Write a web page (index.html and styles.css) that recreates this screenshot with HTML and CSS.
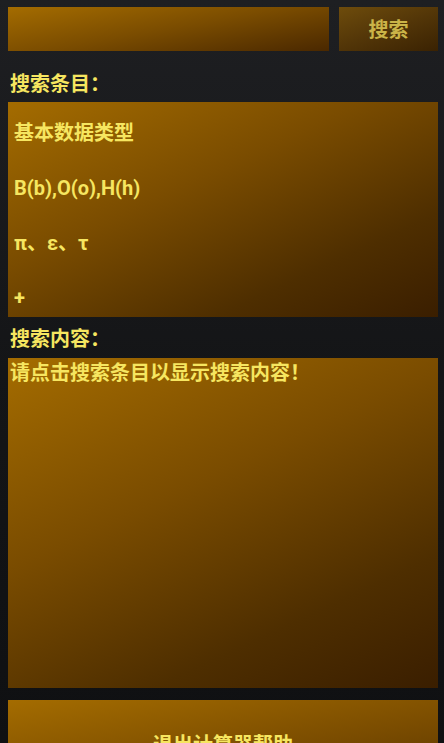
FILE: index.html
```html
<!DOCTYPE html>
<html lang="zh">
<head>
<meta charset="utf-8">
<title>计算器帮助</title>
<link rel="stylesheet" href="styles.css">
</head>
<body>
<div class="page">
  <div class="search-row">
    <div class="search-input"></div>
    <div class="search-btn">搜索</div>
  </div>
  <div class="label label-items">搜索条目：</div>
  <div class="panel items">
    <div class="item">基本数据类型</div>
    <div class="item">B(b),O(o),H(h)</div>
    <div class="item">π、ε、τ</div>
    <div class="item">+</div>
  </div>
  <div class="label label-content">搜索内容：</div>
  <div class="panel content">请点击搜索条目以显示搜索内容！</div>
  <div class="panel exit-btn">退出计算器帮助</div>
</div>
</body>
</html>
```

FILE: styles.css
```css
html, body {
  margin: 0;
  padding: 0;
  height: 100%;
  overflow: hidden;
}
body {
  background: linear-gradient(180deg, #1e1f22 0%, #141517 50%, #0f1012 100%);
  font-family: Roboto, "Noto Sans CJK SC", sans-serif;
  font-weight: 700;
  color: #f6e660;
}
.page {
  padding: 7px 6px 0 8px;
  display: flex;
  flex-direction: column;
}
.search-row {
  display: flex;
  gap: 10px;
  height: 44px;
}
.search-input {
  flex: 1;
  background: linear-gradient(170deg, #a46c00 0%, #7a4c00 50%, #4a2800 100%);
}
.search-btn {
  width: 99px;
  display: flex;
  align-items: center;
  justify-content: center;
  font-size: 20px;
  padding-bottom: 2px;
  box-sizing: border-box;
  color: #cbb448;
  background: linear-gradient(160deg, #6e4c0c 0%, #533608 50%, #3a2202 100%);
}
.label {
  font-size: 20px;
  line-height: 28px;
  padding-left: 2px;
}
.label-items {
  margin-top: 19px;
  margin-bottom: 4px;
}
.panel {
  background: linear-gradient(155deg, #a46c00 0%, #7a4c00 40%, #4e2e00 75%, #3a1e00 100%);
}
.items {
  height: 215px;
  overflow: hidden;
  padding: 4px 0 0 6px;
  box-sizing: border-box;
}
.item {
  height: 55px;
  line-height: 55px;
  font-size: 20px;
  white-space: nowrap;
}
.label-content {
  margin-top: 8px;
  margin-bottom: 5px;
}
.content {
  height: 330px;
  box-sizing: border-box;
  padding: 1px 0 0 2px;
  font-size: 20px;
  line-height: 28px;
}
.exit-btn {
  margin-top: 12px;
  height: 86px;
  display: flex;
  align-items: center;
  justify-content: center;
  font-size: 20px;
  background: linear-gradient(170deg, #a46c00 0%, #7a4c00 60%, #5a3600 100%);
}
```
